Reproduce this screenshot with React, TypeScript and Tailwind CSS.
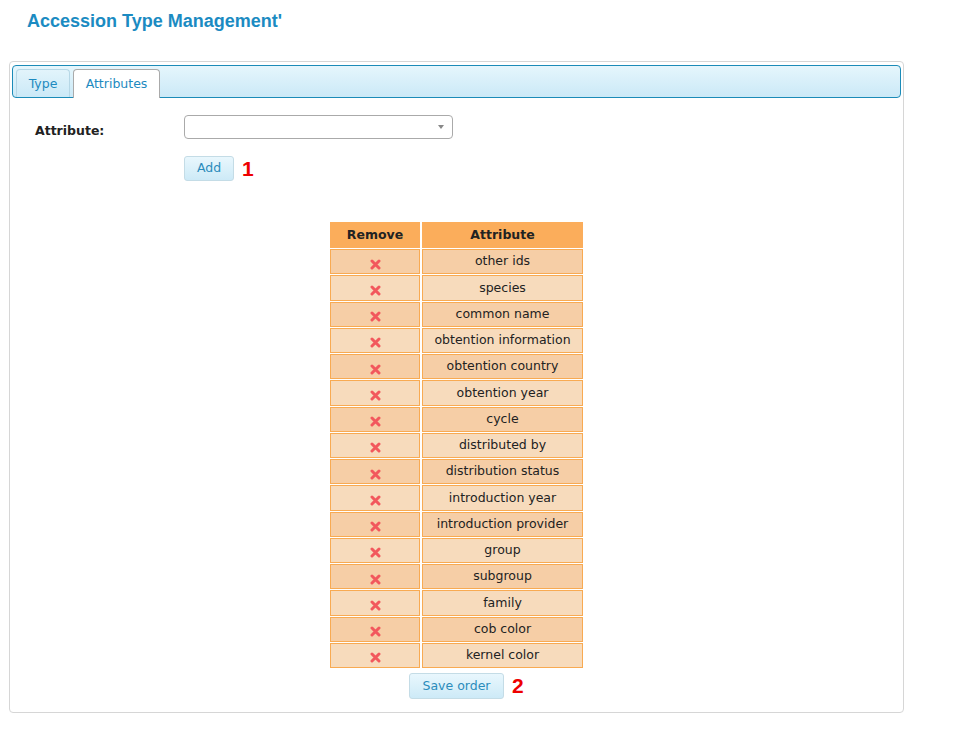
import React from 'react';

const attributes = [
  'other ids', 'species', 'common name', 'obtention information', 'obtention country',
  'obtention year', 'cycle', 'distributed by', 'distribution status', 'introduction year',
  'introduction provider', 'group', 'subgroup', 'family', 'cob color', 'kernel color',
];

function RemoveIcon() {
  return (
    <svg width="11" height="11" viewBox="0 0 11 11" className="inline-block mt-[5px]">
      <path d="M2 2 L9 9 M9 2 L2 9" stroke="#f2585d" strokeWidth="3" strokeLinecap="round" />
    </svg>
  );
}

export default function App() {
  return (
    <div className="min-h-[744px] bg-white text-[12.5px] text-[#222]" style={{ fontFamily: '"DejaVu Sans", Verdana, sans-serif' }}>
      {/* Title */}
      <h1
        className="pl-[27px] pt-[10px] text-[18px] leading-[22px] font-bold text-[#1b8bc2]"
        style={{ fontFamily: '"Liberation Sans", Arial, sans-serif' }}
      >
        Accession Type Management'
      </h1>

      {/* Panel */}
      <div className="ml-[9px] mt-[29px] w-[895px] border border-[#d6d6d6] rounded-[4px] px-[2px] pt-[3px] pb-[13px]">
        {/* Tabs */}
        <div className="flex items-end gap-[3px] h-[33px] pl-[3px] border border-[#1b8bb8] rounded-[4px] bg-gradient-to-b from-[#e5f6fc] to-[#cbe9f7]">
          <div className="w-[54px] h-[28px] pt-[2px] flex items-center justify-center border border-b-0 border-[#b6d7e6] rounded-t-[4px] bg-gradient-to-b from-[#e2f4fb] to-[#cbe9f7] text-[#1d8ac0]">
            Type
          </div>
          <div className="w-[87px] h-[29px] -mb-px pt-[2px] pb-px flex items-center justify-center border border-b-0 border-[#aaaaaa] rounded-t-[4px] bg-white text-[#1d8ac0]">
            Attributes
          </div>
        </div>

        {/* Form */}
        <div className="mt-[17px] flex items-start">
          <div className="w-[172px] pl-[23px] pt-[8px] leading-[15px] font-bold">Attribute:</div>
          <div className="w-[269px] h-[24px] border border-[#aaaaaa] rounded-[4px] bg-white flex items-center justify-end pr-[8px]">
            <span className="w-0 h-0 border-l-[3px] border-r-[3px] border-t-[4px] border-l-transparent border-r-transparent border-t-[#888]" />
          </div>
        </div>
        <div className="mt-[17px] flex items-center pl-[172px]">
          <button className="w-[50px] h-[25px] border border-[#c4dce6] rounded-[3px] bg-gradient-to-b from-[#e9f7fd] to-[#cdeaf7] text-[#2b8cbc]">
            Add
          </button>
          <span className="ml-[8px] text-[21px] leading-[24px] font-bold text-[#ee0000]" style={{ fontFamily: '"Liberation Sans", Arial, sans-serif' }}>1</span>
        </div>

        {/* Table */}
        <div className="mt-[40px] flex justify-center">
          <table className="border-separate border-spacing-x-[2px] border-spacing-y-px">
            <thead>
              <tr>
                <th className="w-[90px] h-[26px] p-0 bg-[#fbad5b] font-bold text-center">Remove</th>
                <th className="w-[161px] h-[26px] p-0 bg-[#fbad5b] font-bold text-center">Attribute</th>
              </tr>
            </thead>
            <tbody>
              {attributes.map((a, i) => {
                const bg = i % 2 === 0 ? 'bg-[#f6cea6]' : 'bg-[#f7dbbc]';
                return (
                  <tr key={a}>
                    <td className={`h-[25.25px] p-0 text-center leading-none border border-[#f8aa52] ${bg}`}>
                      <RemoveIcon />
                    </td>
                    <td className={`h-[25.25px] p-0 text-center border border-[#f8aa52] ${bg}`}>{a}</td>
                  </tr>
                );
              })}
            </tbody>
          </table>
        </div>

        {/* Save order */}
        <div className="mt-[4px] flex justify-center">
          <div className="relative">
            <button className="w-[95px] h-[26px] border border-[#c4dce6] rounded-[3px] bg-gradient-to-b from-[#e9f7fd] to-[#cdeaf7] text-[#2b8cbc]">
              Save order
            </button>
            <span
              className="absolute left-full top-[1px] ml-[8px] text-[21px] leading-[24px] font-bold text-[#ee0000]"
              style={{ fontFamily: '"Liberation Sans", Arial, sans-serif' }}
            >
              2
            </span>
          </div>
        </div>
      </div>
    </div>
  );
}
